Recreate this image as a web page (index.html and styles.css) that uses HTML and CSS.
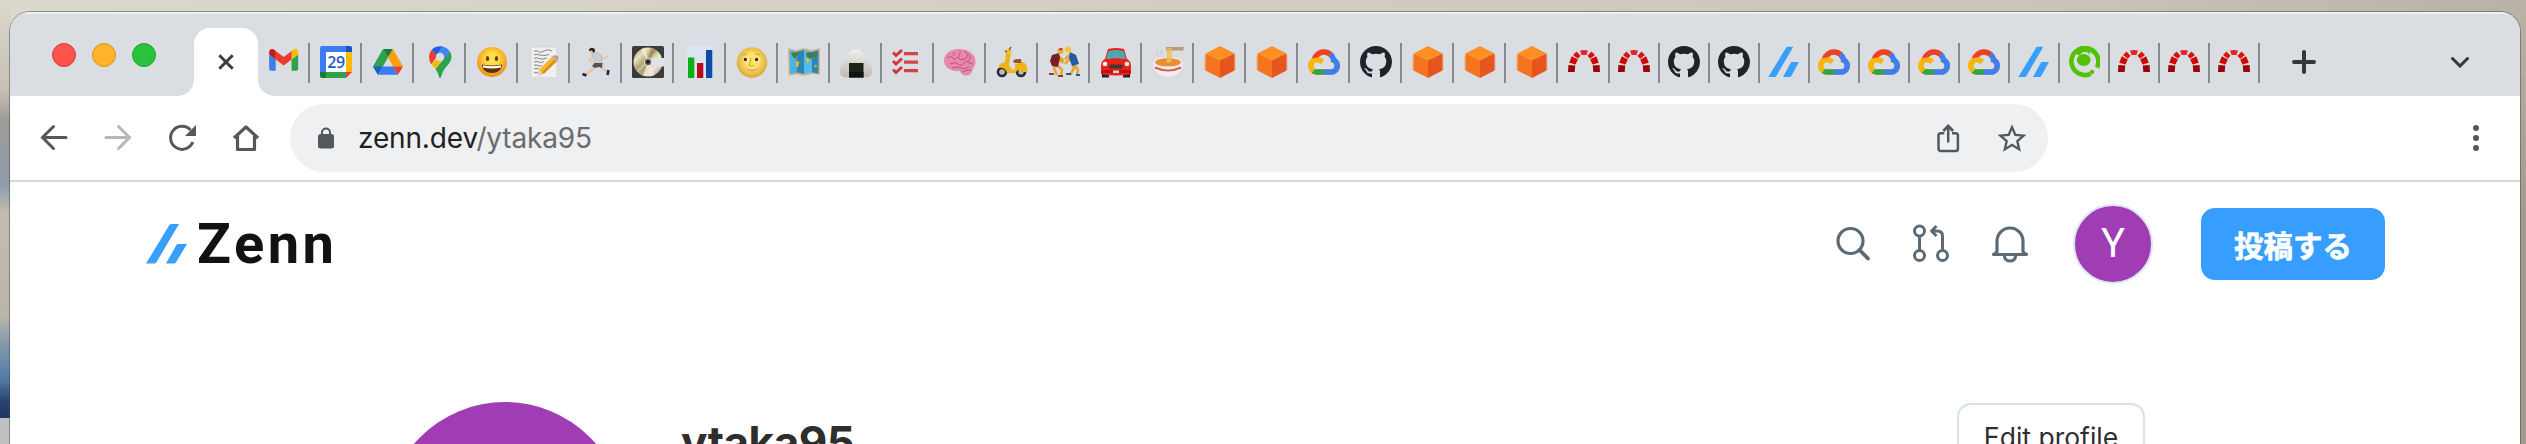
FILE: index.html
```html
<!DOCTYPE html>
<html lang="ja">
<head>
<meta charset="utf-8">
<title>ytaka95 | Zenn</title>
<link rel="stylesheet" href="styles.css">
</head>
<body>
<svg class="defs" width="0" height="0" aria-hidden="true">
  <defs>
    <radialGradient id="gSmile" cx=".5" cy=".4" r=".6"><stop offset=".3" stop-color="#ffe04a"/><stop offset="1" stop-color="#f08a10"/></radialGradient>
    <radialGradient id="gMoon" cx=".5" cy=".45" r=".55"><stop offset=".4" stop-color="#fbe36c"/><stop offset="1" stop-color="#dda53a"/></radialGradient>
    <linearGradient id="gDisc" x1="0" y1="0" x2="1" y2="1"><stop offset="0" stop-color="#a58a50"/><stop offset=".25" stop-color="#e9e3c0"/><stop offset=".42" stop-color="#b7a07a"/><stop offset=".55" stop-color="#d8e6b0"/><stop offset=".72" stop-color="#f0dfe0"/><stop offset="1" stop-color="#8f8a5a"/></linearGradient>
    <linearGradient id="gRice" x1="0" y1="0" x2="0" y2="1"><stop offset="0" stop-color="#f1f0ea"/><stop offset="1" stop-color="#bcbab0"/></linearGradient>
    <clipPath id="cloudClip"><path d="M12.19 2.38a9.344 9.344 0 0 0-9.234 6.893c.053-.02-.055.013 0 0-3.875 2.551-3.922 8.11-.247 10.941l.006-.007-.007.03a6.717 6.717 0 0 0 4.077 1.356h5.173l.03.03h5.192c6.687.053 9.376-8.605 3.835-12.35a9.365 9.365 0 0 0-2.821-4.552l-.043.043.006-.05A9.344 9.344 0 0 0 12.19 2.38zm-.358 4.146c1.244-.04 2.518.368 3.486 1.15a5.186 5.186 0 0 1 1.862 4.078v.518c3.53-.07 3.53 5.262 0 5.193h-5.193l-.008.009v-.04H6.785a2.59 2.59 0 0 1-1.067-.23h.001a2.597 2.597 0 1 1 3.437-3.437l3.013-3.012A6.747 6.747 0 0 0 8.11 8.24c.018-.01.04-.026.054-.023a5.186 5.186 0 0 1 3.67-1.69z"/></clipPath>
  </defs>
  <symbol id="gmail" viewBox="48.5 33 97 97">
    <path fill="#3f7df5" d="M58 108h14V74L52 59v43c0 3.32 2.69 6 6 6"/><path fill="#2fa24c" d="M120 108h14c3.32 0 6-2.69 6-6V59l-20 15"/><path fill="#fbb804" d="M120 48v26l20-15v-8c0-7.42-8.47-11.65-14.4-7.2"/><path fill="#ea3d2f" d="M72 74V48l24 18 24-18v26L96 92"/><path fill="#bb1f1b" d="M52 51v8l20 15V48l-5.6-4.2c-5.94-4.45-14.4-.22-14.4 7.2"/>
  </symbol>
  <symbol id="drive" viewBox="0 0 32 32">
    <path fill="#2fa24c" d="M11 3 16 11.500 6 29 1 20.500z"/><path fill="#1a7f3a" d="M11 3h10l-5 8.500z"/><path fill="#fca103" d="M21 3 31 20.500H21.200L16 11.500z"/><path fill="#3c7bf2" d="M10.500 20.500h11l4.500 8.300H6.500z"/><path fill="#1a5fd0" d="M1 20.500h9.500L6 28.800z"/><path fill="#ea4031" d="M21.300 20.500H31l-5 8.300z"/>
  </symbol>
  <symbol id="maps" viewBox="0 0 32 32">
    <path fill="#2fa24c" d="M26 5.500A11 11 0 0 1 25 17.500C21 22 18 26 17 31c-.3 1.300-1.700 1.300-2 0-.6-3-1.800-5.500-3.500-8z"/><path fill="#fbb804" d="M7.500 18.500 20 5l3 3-11.500 15c-1.300-1.800-2.800-3.200-4-4.500z"/><path fill="#ea4031" d="M7.700 4 14 9.300l-6.700 9C4.500 14.500 4 8 7.700 4z"/><path fill="#1c62de" d="M7.700 4C10 1 14 0 18.500.4L13 9z"/><path fill="#4285f4" d="M18.500.4C22.500 1.400 25 3.500 26 6.500L19 14 13 9z"/><circle cx="16" cy="11" r="4.200" fill="#dadde2"/>
  </symbol>
  <symbol id="smile" viewBox="0 0 32 32">
    <circle cx="16" cy="16" r="15" fill="url(#gSmile)"/><ellipse cx="11.500" cy="12.500" rx="1.700" ry="2.600" fill="#6a3a10"/><ellipse cx="20.500" cy="12.500" rx="1.700" ry="2.600" fill="#6a3a10"/><path d="M6 18.500q10 2 20 0c0 5-4.500 8.500-10 8.500S6 23.500 6 18.500z" fill="#5a3212"/><path d="M7 19.300q9 1.700 18 0v2.200q-9 2-18 0z" fill="#fff"/>
  </symbol>
  <symbol id="memo" viewBox="0 0 32 32">
    <path fill="#eeefee" stroke="#cfd0d0" stroke-width=".6" d="M3 1h26v30.500H3z"/><path d="M6 5.500q2-2 4 0t6-.5 8 0M6 9q3-1.500 6 0t9-.5M6 12.500q2-1.500 5 0t8-.5M6 16q3-1.500 5 0t5-.5M6 19.500q2-1.500 4 0t4 0M6 23q2-1.500 5 0M6 27q2-1.500 4 0" fill="none" stroke="#777" stroke-width=".9"/><path fill="#f7b92c" d="m11 24 12.500-13 5 4.500L15.500 28z"/><path fill="#d98d16" d="m14 26.500 12.500-13 2 2L15.500 28z"/><path fill="#e9c79a" d="m11 24 4.500 4L10 30z"/><path fill="#aab0b5" d="m23.500 11 1.600-1.300 4.800 4.500-1.400 1.300z"/><path fill="#ef7d82" d="M25 9.800q2.500-1.500 4.500.5t.5 4z"/>
  </symbol>
  <symbol id="runner" viewBox="0 0 32 32">
    <path d="m15 19-4 6-7 4M20 19l3 4 5 3" fill="none" stroke="#eec3a2" stroke-width="2.400"/><path d="m13 10-4 4 4 3M20 9l3 4 5-3" fill="none" stroke="#eec3a2" stroke-width="1.800"/><path fill="#c9ced4" stroke="#a9afb6" stroke-width=".6" d="m12 8 5-2 4 3 1 9h-7z"/><path fill="#50545a" d="M14.500 17h8l-.5 5-3-1-4 1-3-2z"/><circle cx="12.500" cy="5" r="2.700" fill="#eec3a2"/><path fill="#2a2526" d="M9 5c-.5-3 3-4 5-2.500C16 4 15 6 13.500 7L12 4.500z"/><path d="m2.500 28 4 1.500M28.500 24l-1 5" stroke="#18255a" stroke-width="2.600"/>
  </symbol>
  <symbol id="minidisc" viewBox="0 0 32 32">
    <rect width="32" height="32" rx="1.500" fill="#3b3b3e"/><circle cx="16" cy="16" r="14.500" fill="url(#gDisc)"/><path fill="#f1ecd0" opacity=".8" d="M16 16 9 3.500a14.500 14.500 0 0 1 5-2zM16 16l7 12.700a14.500 14.500 0 0 1-5.500 1.800z"/><path fill="#9a7c50" opacity=".6" d="m16 16 3-14.200a14.500 14.500 0 0 1 5 2.300zM16 16l-5 13.500a14.500 14.500 0 0 1-5-3z"/><circle cx="16" cy="16" r="4" fill="#d9d9d4"/><circle cx="16" cy="16" r="3" fill="#4b4d50"/><circle cx="16" cy="16" r="1.200" fill="#111"/><path fill="#dfe1e4" d="M20 12h12v8.500H20l-1-4z"/>
  </symbol>
  <symbol id="chart" viewBox="0 0 32 32">
    <path fill="#dbe5f2" d="M3 .5h26V32H3z"/><path fill="#0cb014" d="M4 11.500h6.300V32H4z"/><path fill="#c00a1a" d="M13 17h6.300v15H13z"/><path fill="#0c4ca8" d="M22 4h6.300v28H22z"/>
  </symbol>
  <symbol id="moon" viewBox="0 0 32 32">
    <circle cx="16" cy="16.500" r="15.200" fill="url(#gMoon)"/><ellipse cx="9.500" cy="13.500" rx="2.700" ry="2" fill="#fff7d8"/><ellipse cx="21" cy="13.500" rx="2.700" ry="2" fill="#fff7d8"/><circle cx="9.300" cy="13.500" r="1.700" fill="#3b260f"/><circle cx="20.600" cy="13.500" r="1.700" fill="#3b260f"/><path d="M15 12q-.5 5-2 7 2 2 4.500.3M11 23q5 3.500 9.500 0M6.500 9q2-1.500 4.500-.5M19.500 8.500q2.500-1 4.500.5" fill="none" stroke="#c99b34" stroke-width="1"/>
  </symbol>
  <symbol id="map" viewBox="0 0 32 32">
    <path fill="#d9b48a" d="m0 2 8 2 8-2 8 2 8-2v27l-8-1-8 2-8-1.500L.5 30z"/><path fill="#45b5e6" d="m1.500 4 7 1.700V27L2 28z"/><path fill="#2e86b8" d="m8.500 5.700 7.500-2V28l-7.500-1.500z"/><path fill="#4dbdec" d="m16 3.700 8 2V26.500L16 28z"/><path fill="#2e86b8" d="m24 5.700 6.500-1.700v23.500L24 26.500z"/><path fill="#4a7a3b" d="m3 7 4-1 4 2-3 2 0 3-3-2zM18 7l4-1 6 2 1 3-4 0-2 2-4-2z"/><path fill="#eeb432" d="m8 15 3.500 1-2 6-1.500-2zM17.500 12l4 1-2 6zM26 19l3 0-1 3z"/>
  </symbol>
  <symbol id="onigiri" viewBox="0 0 32 32">
    <path fill="url(#gRice)" d="M16 3c5 0 7 3 9.500 8S32 20 32 25.500c0 4.500-3 6-8 6H8c-5 0-8-1.500-8-6C0 20 4 16 6.500 11S11 3 16 3z"/><path fill="#1a2418" d="M9 17h14.500v14.500H9z"/><path fill="#0e150d" d="M9 26h14.500v5.500H9z"/>
  </symbol>
  <symbol id="checklist" viewBox="0 0 32 32">
    <path d="m1 6.500 3 3L10 4M1 15l3 3 6-5.500M1 23.500l3 3 6-5.500" fill="none" stroke="#cf3636" stroke-width="2.900"/><path fill="#cf4545" d="M12 6h14v3.200H12zM12 14.500h14v3.200H12zM12 23h14v3.200H12z"/>
  </symbol>
  <symbol id="brain" viewBox="0 0 32 32">
    <path fill="#e887ac" d="M0 15C0 7 7 3 15 3c8 0 16 4 16.500 12 .3 5-2.500 6-3 9-.6 3.500-3 5.500-6.500 5.500-4 0-5-2.500-6-4.500C9 26 0 22 0 15z"/><path d="M3 12q4-3 6 0t5-1 2-6M14 11q4 5 8 1t-2-7M6 18q5-3 8 0t6-1 6 1M24 8q4 3 1 6t4 4M8 22q5-2 9 0t8-1M9 6q2 2 1 4M18 26q4-2 9-2" fill="none" stroke="#bd5582" stroke-width="1"/>
  </symbol>
  <symbol id="scooter" viewBox="0 0 32 32">
    <circle cx="6" cy="26" r="5.300" fill="#2b2c30"/><circle cx="25" cy="26" r="5.300" fill="#2b2c30"/><circle cx="6" cy="26" r="2.800" fill="#b9bcc0"/><circle cx="25" cy="26" r="2.600" fill="#b9bcc0"/><path fill="#eeb41a" d="M10 7h5l-2 12 3 4.500h3V18l8-2c4 2 5 6 4 10h-6l-3-2-3 3H11c-1-4-4-6-9-5l2-4 5-2z"/><path fill="#9a5226" d="M17 14.500q2-2 8-1.500l.5 4H18z"/><ellipse cx="12.500" cy="5.500" rx="3.200" ry="2.500" fill="#f4c427"/><path d="m13 4 2-3M9 5l2 1" stroke="#444" stroke-width="1.200"/>
  </symbol>
  <symbol id="wrestlers" viewBox="0 0 32 32">
    <path d="m8 16-2 6 3 7M10 20l4 4-1 5M24 16l2 6-4 7M26 18l4 6-1 5M9 11l6 6M24 10l-7 8M9 9l7 6M23 8l-6 5" fill="none" stroke="#e7a52c" stroke-width="2.500"/><path fill="#7a1d2c" d="m4 9 7-2 1 5-2 9-6-1-2-5z"/><path fill="#235aa6" d="m22 6 6 3 3 9-7 2-3-8z"/><circle cx="12.500" cy="5" r="3" fill="#efb12d"/><circle cx="20" cy="3.500" r="3" fill="#f5c534"/><path fill="#d33b2c" d="M10 3.500q2-2.500 5-1l-1 2z"/><path d="M1 28h5M10 30h5" stroke="#a82f2c" stroke-width="2"/><path d="M18 28h5M28 29h4" stroke="#27579b" stroke-width="2"/>
  </symbol>
  <symbol id="car" viewBox="0 0 32 32">
    <path fill="#2a2324" d="M2 25h7v6.500H2zM23 25h7v6.500h-7z"/><path fill="#ee201a" d="M8 3q8-2 16 0l3 10q4 2 4 7v8q-15 3-30 0v-8q0-5 4-7z"/><path fill="#4fa8ae" d="M8.500 5q7.500-2 15 0l2.500 8q-10-1.500-20 0z"/><path fill="#b8130f" d="M1.500 24h29v3h-29z"/><rect x="9" y="18.500" width="14" height="4" rx="2" fill="#4a3336"/><circle cx="5" cy="18" r="2.300" fill="#eef0f1"/><circle cx="27" cy="18" r="2.300" fill="#eef0f1"/><path fill="#d8d8d8" d="M13 24.500h6v2.500h-6z"/>
  </symbol>
  <symbol id="noodle" viewBox="0 0 32 32">
    <path d="M6 10q-3-3 0-6M10 9q-2-2 0-5" fill="none" stroke="#c3c7ca" stroke-width="1"/><path fill="#b79a80" d="M14 1h17.500v3.500H14z"/><path fill="#f2efec" d="M1 16c0 8 5 14.500 15 14.500S31 24 31 16z"/><ellipse cx="16" cy="16" rx="15" ry="5.500" fill="#efe6df"/><ellipse cx="16" cy="16.300" rx="12.800" ry="4" fill="#e98f33"/><path d="M16 2v15M18.500 2v14" stroke="#ecc24b" stroke-width="2"/><path d="M3 21.500q13 6 26 0" fill="none" stroke="#d65a55" stroke-width="2"/>
  </symbol>
  <symbol id="cube" viewBox="0 0 32 32">
    <path fill="#efb08a" opacity=".55" d="M0 9h32v15H0z"/><path fill="#ff8f22" d="M16 0 30.500 7.500 16 14.500 1.500 7.500z"/><path fill="#f5741f" d="m1.500 7.500 14.500 7V32L1.500 24.500z"/><path fill="#e6551d" d="m30.500 7.500-14.500 7V32l14.500-7.500z"/>
  </symbol>
  <symbol id="gcloud" viewBox="0 0 24 24">
    <g clip-path="url(#cloudClip)"><path fill="#fbb506" d="M0 0h24v24H0z"/><path fill="#ea4031" d="M0 0h20L19.200 3.900l-3.700 3.900L11 8l-2.800.3-5.300 1L0 9z"/><path fill="#3f7df5" d="M19.200 3.900 15.300 7.800 16 16l-4 1v6h12V0z"/><path fill="#2fa24c" d="m2.600 20.300 3.200-3.200H12V23H0z"/></g>
  </symbol>
  <symbol id="github" viewBox="0 0 16 16">
    <path fill="#1f2328" d="M8 0C3.580 0 0 3.580 0 8c0 3.540 2.290 6.530 5.470 7.590.4.070.55-.17.55-.38 0-.19-.01-.82-.01-1.490-2.010.37-2.530-.49-2.690-.94-.09-.23-.48-.94-.82-1.130-.28-.15-.68-.52-.01-.53.63-.01 1.080.58 1.230.82.72 1.210 1.870.87 2.330.66.07-.52.28-.87.51-1.070-1.780-.2-3.640-.89-3.640-3.950 0-.87.31-1.590.82-2.150-.08-.2-.36-1.020.08-2.120 0 0 .67-.21 2.200.82.64-.18 1.320-.27 2-.27.68 0 1.360.09 2 .27 1.530-1.040 2.200-.82 2.200-.82.44 1.100.16 1.920.08 2.120.51.56.82 1.270.82 2.150 0 3.070-1.870 3.750-3.650 3.950.29.25.54.73.54 1.480 0 1.070-.01 1.930-.01 2.200 0 .21.15.46.55.38A8.013 8.013 0 0 0 16 8c0-4.420-3.580-8-8-8z"/>
  </symbol>
  <symbol id="redmine" viewBox="0 0 32 32">
    <path fill="#9c0406" d="m.4 19 6.800.6L6.700 26H0zM31.600 19l-6.800.6.500 6.400H32z"/><path fill="#cc0505" d="m3.800 10.300 6 3.200-2.300 5-6.300-1.700zM28.200 10.300l-6 3.200 2.300 5 6.300-1.700z"/><path fill="#d81408" d="m8.500 5.500 4 4.300-2.600 3-4.900-3.800zM23.500 5.500l-4 4.300 2.600 3L27 9z"/><path fill="#e32632" d="M12 4.500q4-1 8 0L18.500 9h-5z"/>
  </symbol>
  <symbol id="zenn" viewBox="0 0 32 32">
    <path fill="#389fff" d="M.3 31 18.200 1.500q.5-.7 1.200-.7h5.900L8.200 30.200q-.4.800-1.200.8zM15 31l7.800-14.200q.4-.8 1.200-.8h7l-7.800 14.200q-.5.800-1.300.8z"/>
  </symbol>
  <symbol id="qiita" viewBox="0 0 32 32">
    <path d="M22.500 27.800A13.500 13.500 0 1 1 29 21.500" fill="none" stroke="#52c200" stroke-width="4.600"/><path fill="#52c200" d="m7 7 4 2.500 4-3.500h4l3 3 3.500-4-4-3H10z"/><circle cx="24" cy="26" r="2.200" fill="#52c200"/><ellipse cx="15.700" cy="14" rx="6.900" ry="6" fill="#52c200"/><path d="M7.500 9.500q1-1 2 1M22 6l1 4.500" stroke="#dfe5d8" stroke-width="1.200" fill="none"/>
  </symbol>
</svg>

<div class="window">
  <div class="tabstrip">
    <div class="lights"><i class="light red"></i><i class="light amber"></i><i class="light green"></i></div>
    <div class="active-tab">
      <svg width="16" height="16" viewBox="0 0 16 16"><path d="m1.300 1.300 13.400 13.400M14.700 1.300 1.300 14.700" stroke="#3a3d41" stroke-width="3" fill="none"/></svg>
    </div>
    <div class="tabs">
      <span class="tab"><svg><use href="#gmail"/></svg></span>
      <span class="tab"><svg viewBox="0 0 32 32">
        <path fill="#3c7bf2" d="M2 0h24v6H6v20H0V2a2 2 0 0 1 2-2z"/><path fill="#1357c6" d="M26 0h4a2 2 0 0 1 2 2v4h-6z"/><path fill="#fbb804" d="M26 6h6v20h-6z"/><path fill="#1a7a36" d="M0 26h6v6H2a2 2 0 0 1-2-2z"/><path fill="#2fa24c" d="M6 26h20v6H6z"/><path fill="#ea3d2f" d="M26 26h6l-6 6z"/><path fill="#fff" d="M6 6h20v20H6z"/>
        <text class="date" x="16" y="22" text-anchor="middle">29</text>
      </svg></span>
      <span class="tab"><svg><use href="#drive"/></svg></span>
      <span class="tab"><svg><use href="#maps"/></svg></span>
      <span class="tab"><svg><use href="#smile"/></svg></span>
      <span class="tab"><svg><use href="#memo"/></svg></span>
      <span class="tab"><svg><use href="#runner"/></svg></span>
      <span class="tab"><svg><use href="#minidisc"/></svg></span>
      <span class="tab"><svg><use href="#chart"/></svg></span>
      <span class="tab"><svg><use href="#moon"/></svg></span>
      <span class="tab"><svg><use href="#map"/></svg></span>
      <span class="tab"><svg><use href="#onigiri"/></svg></span>
      <span class="tab"><svg><use href="#checklist"/></svg></span>
      <span class="tab"><svg><use href="#brain"/></svg></span>
      <span class="tab"><svg><use href="#scooter"/></svg></span>
      <span class="tab"><svg><use href="#wrestlers"/></svg></span>
      <span class="tab"><svg><use href="#car"/></svg></span>
      <span class="tab"><svg><use href="#noodle"/></svg></span>
      <span class="tab"><svg><use href="#cube"/></svg></span>
      <span class="tab"><svg><use href="#cube"/></svg></span>
      <span class="tab"><svg><use href="#gcloud"/></svg></span>
      <span class="tab"><svg><use href="#github"/></svg></span>
      <span class="tab"><svg><use href="#cube"/></svg></span>
      <span class="tab"><svg><use href="#cube"/></svg></span>
      <span class="tab"><svg><use href="#cube"/></svg></span>
      <span class="tab"><svg><use href="#redmine"/></svg></span>
      <span class="tab narrow"><svg><use href="#redmine"/></svg></span>
      <span class="tab narrow"><svg><use href="#github"/></svg></span>
      <span class="tab narrow"><svg><use href="#github"/></svg></span>
      <span class="tab narrow"><svg><use href="#zenn"/></svg></span>
      <span class="tab narrow"><svg><use href="#gcloud"/></svg></span>
      <span class="tab narrow"><svg><use href="#gcloud"/></svg></span>
      <span class="tab narrow"><svg><use href="#gcloud"/></svg></span>
      <span class="tab narrow"><svg><use href="#gcloud"/></svg></span>
      <span class="tab narrow"><svg><use href="#zenn"/></svg></span>
      <span class="tab narrow"><svg><use href="#qiita"/></svg></span>
      <span class="tab narrow"><svg><use href="#redmine"/></svg></span>
      <span class="tab narrow"><svg><use href="#redmine"/></svg></span>
      <span class="tab narrow"><svg><use href="#redmine"/></svg></span>
    </div>
    <svg class="new-tab" width="24" height="24" viewBox="0 0 24 24"><path d="M12 2v20M2 12h20" stroke="#35383c" stroke-width="4" stroke-linecap="round"/></svg>
    <svg class="tab-search" width="20" height="12" viewBox="0 0 20 12"><path d="m2.500 2.500 7.500 7.500 7.500-7.500" fill="none" stroke="#35383c" stroke-width="3" stroke-linecap="round"/></svg>
  </div>

  <div class="toolbar">
    <div class="nav">
      <svg width="32" height="32" viewBox="0 0 32 32"><path d="M28 15.500H5M15.500 4.500l-11 11 11 11" fill="none" stroke="#54585d" stroke-width="3" stroke-linecap="round"/></svg>
      <svg width="32" height="32" viewBox="0 0 32 32"><path d="M4 15.500h23M16.500 4.500l11 11-11 11" fill="none" stroke="#b5b7ba" stroke-width="3" stroke-linecap="round"/></svg>
      <svg width="32" height="32" viewBox="0 0 32 32"><path d="M26.800 20A11.500 11.500 0 1 1 24.500 8" fill="none" stroke="#54585d" stroke-width="3"/><path fill="#54585d" d="M30 3v11H19z"/></svg>
      <svg width="32" height="32" viewBox="0 0 32 32"><path d="M4 16 16 5l12 11M7.500 14v13.500h17V14" fill="none" stroke="#54585d" stroke-width="3.200" stroke-linejoin="round"/></svg>
    </div>
    <div class="omnibox">
      <svg width="16" height="22" viewBox="0 0 16 22"><rect y="7" width="16" height="14.500" rx="2.500" fill="#54585d"/><path d="M4 8V5.500a4 4 0 0 1 8 0V8" fill="none" stroke="#54585d" stroke-width="2"/></svg>
      <span class="url">zenn.dev<span class="path">/ytaka95</span></span>
      <svg class="share" width="32" height="32" viewBox="0 0 32 32"><path d="M12.300 11.300H8.800a2.300 2.300 0 0 0-2.300 2.300v13.100A2.300 2.300 0 0 0 8.800 29h14.800a2.300 2.300 0 0 0 2.300-2.300V13.600a2.300 2.300 0 0 0-2.300-2.300H20M16.200 20.500V5" fill="none" stroke="#54585d" stroke-width="2.500"/><path d="m11.300 9 4.900-5 4.900 5" fill="none" stroke="#54585d" stroke-width="2.800"/></svg>
      <svg class="star" width="32" height="32" viewBox=".97 .5 22.07 22.07"><path fill="#54585d" d="M22 9.240l-7.190-.620L12 2 9.190 8.630 2 9.240l5.460 4.730L5.820 21 12 17.270 18.180 21l-1.630-7.030L22 9.240zM12 15.400l-3.760 2.270 1-4.280-3.320-2.880 4.380-.38L12 6.100l1.710 4.040 4.380.38-3.320 2.880 1 4.280L12 15.400z"/></svg>
    </div>
    <svg class="menu" width="32" height="32" viewBox="0 0 32 32"><g fill="#54585d"><circle cx="16" cy="6" r="3"/><circle cx="16" cy="16" r="3"/><circle cx="16" cy="26" r="3"/></g></svg>
  </div>

  <header class="site-header">
    <div class="logo">
      <svg width="42" height="40" viewBox="0 0 42 40"><path fill="#389fff" d="m0 39.600 23.200-38.300Q24 0 25.500 0H33L10.400 38.300q-.8 1.300-2.200 1.300zM20 39.600l10.200-18.300Q31 20 32.300 20H41L30 38.300q-.7 1.300-2 1.300z"/></svg>
      <span class="wordmark">Zenn</span>
    </div>
    <div class="actions">
      <svg width="36" height="36" viewBox="0 0 36 36"><circle cx="14.500" cy="15" r="12.500" fill="none" stroke="#5c6a76" stroke-width="3.200"/><path d="m23.500 24 8.500 8.500" stroke="#5c6a76" stroke-width="3.800" stroke-linecap="round"/></svg>
      <svg class="pr" width="38" height="40" viewBox="0 0 38 40"><g fill="none" stroke="#5c6a76" stroke-width="3"><circle cx="7.500" cy="7" r="5"/><circle cx="7.500" cy="31.500" r="5"/><circle cx="30.500" cy="31.500" r="5"/><path d="M7.500 12v14.500M30.500 26.500V12q0-5-5-5H20M24.500 2 19.500 7l5 5" stroke-linejoin="round"/></g></svg>
      <svg class="bell" width="38" height="38" viewBox="0 0 38 38"><path d="M6 26.500V16a13 13 0 0 1 26 0v10.500q1 2 3.500 3H2.500q2.500-1 3.500-3z" fill="none" stroke="#5c6a76" stroke-width="3.200" stroke-linejoin="round"/><path d="M13.500 31a5.500 5 0 0 0 11 0" fill="none" stroke="#5c6a76" stroke-width="3.200"/></svg>
      <div class="avatar">Y</div>
      <button class="post">投稿する</button>
    </div>
  </header>

  <section class="profile">
    <div class="portrait"></div>
    <h1 class="name">ytaka95</h1>
    <button class="edit">Edit profile</button>
  </section>
</div>
</body>
</html>
```
FILE: styles.css
```css
* { box-sizing: border-box; }
html { height: 444px; overflow: hidden; }
body {
  margin: 0;
  width: 2526px;
  height: 444px;
  overflow: hidden;
  padding: 12px 6px 0 10px;
  font-family: Inter, "Noto Sans CJK JP", sans-serif;
  background:
    linear-gradient(#dad9cb 0, #c6c1b4 90px, #9e9b97 120px, #8e9bad 185px, #c1bcae 212px, #bab7aa 315px, #8d9dac 340px, #4f7aa6 380px, #28406f 402px, #223562 418px, #c0c0c0 418px) 0 0 / 10px 100% no-repeat,
    linear-gradient(#b8b1a4, #a39a8f 200px) 2520px 12px / 6px 100% no-repeat,
    linear-gradient(90deg, #dad9cb, #cbc6b9 80%, #b9b2a7);
}
svg { display: block; flex: none; }
.defs { position: absolute; }
.window {
  height: 432px;
  background: #fff;
  border-radius: 20px 20px 0 0;
  box-shadow: 0 0 0 1px rgba(70, 70, 70, .5);
  overflow: hidden;
}

.tabstrip {
  display: flex;
  align-items: center;
  height: 84px;
  padding: 16px 50px 0 42px;
  background: #dadde2;
  box-shadow: inset 0 2px 0 #eff0f2;
}
.lights { display: flex; gap: 16px; margin-bottom: 14px; }
.light { width: 24px; height: 24px; border-radius: 50%; border: 1px solid; }
.red { background: #ff544e; border-color: #dc3c38; }
.amber { background: #ffb429; border-color: #db931b; }
.green { background: #28c439; border-color: #1ba32a; }
.active-tab {
  position: relative;
  display: flex;
  align-items: center;
  justify-content: center;
  width: 64px;
  height: 68px;
  margin-left: 38px;
  background: #fff;
  border-radius: 16px 16px 0 0;
}
.active-tab::before,
.active-tab::after {
  content: "";
  position: absolute;
  bottom: 0;
  width: 16px;
  height: 16px;
}
.active-tab::before { right: 100%; background: radial-gradient(circle at 0 0, transparent 15.500px, #fff 16px); }
.active-tab::after { left: 100%; background: radial-gradient(circle at 100% 0, transparent 15.500px, #fff 16px); }
.tabs { display: flex; margin-top: 2px; }
.tab {
  height: 40px;
  padding: 3px 8px 0 10px;
  border-right: 2px solid #86898d;
}
.tab.narrow { padding-left: 8px; }
.tab svg { width: 32px; height: 32px; }
.date { font: 600 16px "Open Sans", sans-serif; letter-spacing: -.4px; fill: #1d5cd0; }
.new-tab { margin-left: 32px; }
.tab-search { margin-left: auto; }

.toolbar {
  display: flex;
  align-items: center;
  height: 86px;
  padding: 0 28px;
  border-bottom: 2px solid #d5d6d8;
}
.nav { display: flex; gap: 32px; }
.omnibox {
  display: flex;
  align-items: center;
  width: 1758px;
  height: 68px;
  margin-left: 28px;
  padding: 0 20px 0 28px;
  border-radius: 34px;
  background: #eff0f2;
}
.url {
  margin-left: 24px;
  font: 400 28px/34px Inter, sans-serif;
  letter-spacing: -.15px;
  color: #202124;
}
.path { color: #696b6e; }
.share { margin-left: auto; }
.star { margin-left: 32px; }
.menu { margin-left: auto; }

.site-header {
  display: flex;
  align-items: center;
  justify-content: space-between;
  height: 124px;
  padding: 0 135px 0 136px;
}
.logo { display: flex; align-items: center; gap: 9px; }
.wordmark {
  font: 700 56px/60px Roboto, sans-serif;
  letter-spacing: 3.500px;
  color: #121212;
}
.actions { display: flex; align-items: center; }
.pr { margin-left: 40px; }
.bell { margin-left: 41px; }
.avatar {
  width: 80px;
  height: 80px;
  margin-left: 44px;
  border: 2px solid #dce7f1;
  border-radius: 50%;
  background: #a03db4;
  color: #fff;
  font: 400 40px/76px Roboto, sans-serif;
  text-align: center;
}
.post {
  width: 184px;
  height: 72px;
  margin-left: 48px;
  padding: 0;
  border: 0;
  border-radius: 14px;
  background: #379eff;
  color: #fff;
  font: 700 29.500px/72px "Noto Sans CJK JP", sans-serif;
  -webkit-text-stroke: .6px #fff;
}

.profile {
  display: flex;
  align-items: flex-start;
  height: 138px;
  padding: 96px 375px 0;
  overflow: hidden;
}
.portrait {
  flex: none;
  width: 240px;
  height: 240px;
  border-radius: 50%;
  background: #a03db4;
}
.name {
  margin: 12px 0 0 56px;
  font: 700 44px/56px Inter, sans-serif;
  letter-spacing: -.5px;
  color: #2e2e2e;
}
.edit {
  width: 188px;
  height: 68px;
  margin: 1px 0 0 auto;
  padding: 0;
  border: 2px solid #d5e2ee;
  border-radius: 14px;
  background: #fff;
  color: #2e2e2e;
  font: 400 26.500px/64px Inter, sans-serif;
}
```
